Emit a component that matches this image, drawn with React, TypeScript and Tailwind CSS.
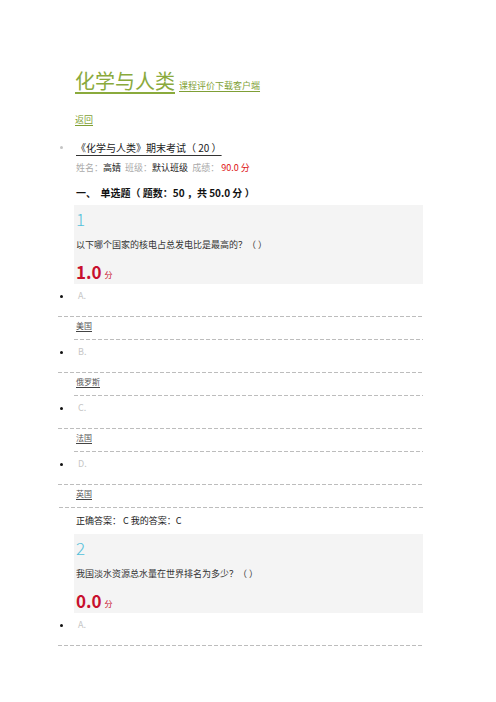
const dash =
  "h-px bg-[repeating-linear-gradient(to_right,#bdbdbd_0px,#bdbdbd_4px,transparent_4px,transparent_6px)]";

const Bullet = ({ light }: { light?: boolean }) => (
  <span
    className={
      light
        ? "-ml-[14px] mr-[13px] w-[3px] h-[3px] rounded-full bg-[#c4c4c4] shrink-0"
        : "-ml-[14px] mr-[13px] w-[3px] h-[3px] rounded-full bg-[#111] shrink-0"
    }
  />
);

const Option = ({ letter, answer, last }: { letter: string; answer?: string; last?: boolean }) => (
  <div className="mt-1">
    <div className="h-4 flex items-center text-[9px] text-[#c6c6c6]">
      <Bullet />
      <span className="pl-[2px]">{letter}</span>
    </div>
    <div className={`mt-3 -ml-[16px] ${dash}`} />
    {answer && (
      <>
        <div className="mt-[3px] h-3 flex items-center pl-[2px]">
          <span className="underline underline-offset-2 decoration-[#444] text-[8px] text-[#555]">{answer}</span>
        </div>
        <div className={last ? `mt-[7px] -ml-[15px] ${dash}` : `mt-[7px] ${dash}`} />
      </>
    )}
  </div>
);

const Question = ({ num, text, score }: { num: string; text: string; score: string }) => (
  <div className="bg-[#f4f4f4] h-[79px] px-[2px] pt-[4px]">
    <div className="h-5 flex items-center text-[17px] text-[#52c0da] font-light">{num}</div>
    <div className="mt-2 h-4 flex items-center text-[9px] text-[#333]">{text}</div>
    <div className="mt-[9px] h-5 flex items-end gap-[3px] text-[#c8102e]">
      <span className="text-[17px] font-bold leading-[20px]">{score}</span>
      <span className="text-[8px] leading-[14px]">分</span>
    </div>
  </div>
);

export default function App() {
  return (
    <div className="w-[496px] h-[702px] bg-white overflow-hidden font-['Noto_Sans_CJK_SC',sans-serif]">
      <div className="ml-[74px] w-[349px] pt-[69px]">
        <div className="h-6 flex items-baseline gap-[4px] pl-[1px]">
          <span className="text-[20px] leading-[24px] text-[#8aaa3c] underline underline-offset-[3px] decoration-[#8aaa3c]">
            化学与人类
          </span>
          <span className="text-[9px] text-[#7f9f36] underline underline-offset-2">课程评价下载客户端</span>
        </div>

        <div className="mt-[19px] h-4 flex items-center pl-[1px]">
          <span className="text-[9px] text-[#7f9f36] underline underline-offset-2">返回</span>
        </div>

        <div className="mt-[11px] h-4 flex items-center">
          <Bullet light />
          <span className="text-[10px] text-[#222] underline underline-offset-[3px] decoration-[#333] whitespace-pre">
            《化学与人类》期末考试（ 20 ）
          </span>
        </div>

        <div className="mt-[6px] h-[14px] flex items-center pl-[2px] text-[9px] text-[#aaa] whitespace-pre">
          <span>姓名：</span>
          <span className="text-[#222]">高婧</span>
          <span>  班级：</span>
          <span className="text-[#222]">默认班级</span>
          <span>  成绩： </span>
          <span className="text-[#d11]">90.0 分</span>
        </div>

        <div className="mt-[9px] h-4 flex items-center pl-[2px] text-[10px] font-bold text-[#111] whitespace-pre">
          一、  单选题（ 题数：50 ，共 50.0 分 ）
        </div>

        <div className="mt-[5px]">
          <Question num="1" text="以下哪个国家的核电占总发电比是最高的？（ ）" score="1.0" />
        </div>

        <Option letter="A." answer="美国" />
        <Option letter="B." answer="俄罗斯" />
        <Option letter="C." answer="法国" />
        <Option letter="D." answer="英国" last />

        <div className="mt-[5px] h-4 flex items-center pl-[2px] text-[9px] text-[#222] whitespace-pre">
          正确答案： C 我的答案：C
        </div>

        <div className="mt-[5px]">
          <Question num="2" text="我国淡水资源总水量在世界排名为多少？（ ）" score="0.0" />
        </div>

        <Option letter="A." />
      </div>
    </div>
  );
}
